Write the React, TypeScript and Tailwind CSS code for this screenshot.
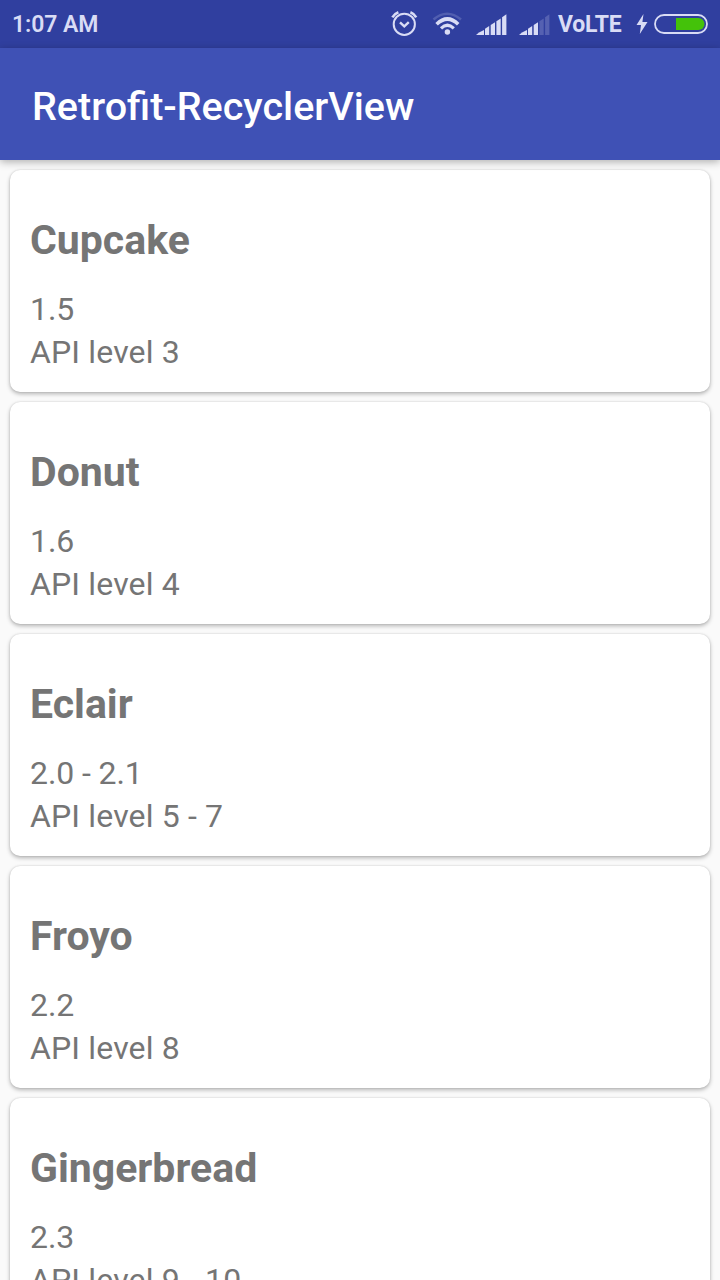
type Release = { name: string; version: string; api: string };

const releases: Release[] = [
  { name: 'Cupcake', version: '1.5', api: 'API level 3' },
  { name: 'Donut', version: '1.6', api: 'API level 4' },
  { name: 'Eclair', version: '2.0 - 2.1', api: 'API level 5 - 7' },
  { name: 'Froyo', version: '2.2', api: 'API level 8' },
  { name: 'Gingerbread', version: '2.3', api: 'API level 9 - 10' },
];

function AlarmIcon() {
  return (
    <svg className="h-7 w-7" viewBox="0 0 28 28" fill="none" stroke="currentColor" strokeWidth="2">
      <circle cx="14.3" cy="14.3" r="10.6" />
      <path d="M10 12.4L14.3 16.4L18.8 12.2" strokeWidth="2.4" />
      <path d="M2.4 7.4Q4.5 3.6 8.4 2.2M20.4 2.2Q24.1 3.6 26.2 7.4" strokeWidth="2.6" />
    </svg>
  );
}

function WifiIcon() {
  return (
    <svg className="h-7 w-8" viewBox="0 0 32 28" fill="none" stroke="currentColor">
      <path d="M2.5 9.5Q16 -2 30 9.5" strokeWidth="2.6" opacity="0.2" />
      <path d="M5.6 14.2Q16.4 3.8 27.2 14.2" strokeWidth="3.6" />
      <path d="M10 18.3Q16.4 12.3 22.8 18.3" strokeWidth="3.2" />
      <circle cx="16.4" cy="22" r="2.7" fill="currentColor" stroke="none" />
    </svg>
  );
}

function SignalIcon({ level }: { level: number }) {
  const bars = [
    'M0 21L3 18.6L8 16V21Z',
    'M9 21V14.8L13.2 12V21Z',
    'M14.7 21V11L19 8.2V21Z',
    'M20.4 21V7.2L24.7 4.4V21Z',
    'M26.1 21V3.2L30.4 0.3V21Z',
  ];
  return (
    <svg className="h-[21px] w-[31px]" viewBox="0 0 31 21" fill="currentColor">
      {bars.map((d, i) => (
        <path key={d} d={d} opacity={i < level ? 1 : 0.22} />
      ))}
    </svg>
  );
}

function BoltIcon() {
  return (
    <svg className="h-5 w-3" viewBox="0 0 12 20" fill="currentColor">
      <path d="M7.5 0L0.5 11H5L3.8 20L11.5 8H6.4Z" />
    </svg>
  );
}

function BatteryIcon() {
  return (
    <svg className="h-5 w-[54px]" viewBox="0 0 54 20" fill="none">
      <rect x="1" y="1" width="52" height="18" rx="9" stroke="currentColor" strokeWidth="1.8" />
      <path d="M22 4H44.5A6 6 0 0 1 44.5 16H22Z" fill="#44c20a" />
    </svg>
  );
}

function StatusBar() {
  return (
    <div className="flex h-12 shrink-0 items-center bg-[#303f9f] pr-3 pl-3 text-[#d9dcf5]">
      <span className="pt-0.5 text-[23px] leading-[46px] font-semibold tracking-[-0.1px]">1:07 AM</span>
      <div className="ml-auto flex items-center">
        <AlarmIcon />
        <div className="ml-[13px] flex"><WifiIcon /></div>
        <div className="ml-[13px] flex"><SignalIcon level={5} /></div>
        <div className="ml-3 flex"><SignalIcon level={3} /></div>
        <span className="ml-2 w-[65px] pt-0.5 text-[23px] leading-[46px] font-bold tracking-[-0.2px] whitespace-nowrap">VoLTE</span>
        <div className="ml-[13px] flex"><BoltIcon /></div>
        <div className="ml-1.5 flex"><BatteryIcon /></div>
      </div>
    </div>
  );
}

function ReleaseCard({ name, version, api }: Release) {
  return (
    <article className="h-[222px] shrink-0 rounded-[10px] bg-white px-5 pt-[45px] text-[#757575] shadow-[0_2px_4px_rgba(0,0,0,0.28),0_0_2px_rgba(0,0,0,0.14)]">
      <h2 className="text-[41px] leading-[50px] font-bold">{name}</h2>
      <p className="mt-[23px] text-[32px] leading-[43px] tracking-[-0.1px]">{version}</p>
      <p className="text-[32px] leading-[43px] tracking-[0.15px]">{api}</p>
    </article>
  );
}

export default function App() {
  return (
    <div className="flex h-[1280px] w-[720px] flex-col overflow-hidden bg-[#fafafa] font-['Roboto',sans-serif]">
      <StatusBar />
      <header className="relative z-10 flex h-28 shrink-0 items-center bg-[#3f51b5] px-8 pt-1.5 shadow-[0_2px_8px_rgba(0,0,0,0.3)]">
        <h1 className="text-[39.5px] leading-[48px] font-medium text-white">Retrofit-RecyclerView</h1>
      </header>
      <main className="flex min-h-0 flex-1 flex-col gap-2.5 overflow-hidden px-2.5 pt-2.5">
        {releases.map((release) => (
          <ReleaseCard key={release.name} {...release} />
        ))}
      </main>
    </div>
  );
}
